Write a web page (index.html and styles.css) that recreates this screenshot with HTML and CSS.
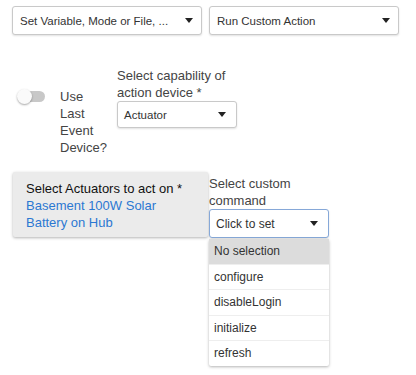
FILE: index.html
```html
<!DOCTYPE html>
<html>
<head>
<meta charset="utf-8">
<link rel="stylesheet" href="styles.css">
</head>
<body>
<div class="page">
  <div class="row top">
    <div class="select wide"><span class="val">Set Variable, Mode or File, ...</span><span class="caret"></span></div>
    <div class="select wide"><span class="val">Run Custom Action</span><span class="caret"></span></div>
  </div>
  <div class="row mid">
    <div class="toggle-group">
      <span class="toggle"><span class="knob"></span></span>
      <span class="tlabel">Use Last Event Device?</span>
    </div>
    <div class="field">
      <div class="flabel">Select capability of action device *</div>
      <div class="select small"><span class="val">Actuator</span><span class="caret"></span></div>
    </div>
  </div>
  <div class="row bottom">
    <div class="card">
      <div class="card-title">Select Actuators to act on *</div>
      <div class="card-link">Basement 100W Solar Battery on Hub</div>
    </div>
    <div class="field cmd">
      <div class="flabel">Select custom command</div>
      <div class="select small focus"><span class="val">Click to set</span><span class="caret"></span></div>
      <ul class="menu">
        <li class="sel">No selection</li>
        <li>configure</li>
        <li>disableLogin</li>
        <li>initialize</li>
        <li>refresh</li>
      </ul>
    </div>
  </div>
</div>
</body>
</html>
```
FILE: styles.css
```css
html, body {
  margin: 0;
  padding: 0;
  background: #ffffff;
}
body {
  font-family: "Liberation Sans", Arial, sans-serif;
  color: #333;
}
.page {
  padding: 6px 0 0 12px;
  min-height: 375px;
  box-sizing: border-box;
}
.row {
  display: flex;
  align-items: flex-start;
}
.top {
  gap: 7px;
}
.select {
  box-sizing: border-box;
  display: flex;
  align-items: center;
  justify-content: space-between;
  background: #fff;
  border: 1px solid #c9c9c9;
  border-radius: 3px;
  box-shadow: 0 1px 2px rgba(0,0,0,0.12);
  font-size: 11.5px;
  color: #333;
  white-space: nowrap;
}
.select.wide {
  width: 190px;
  height: 29px;
  padding: 0 8px 0 7px;
}
.select.small {
  width: 120px;
  height: 27px;
  padding: 0 10px 0 6px;
  font-size: 11.5px;
}
.select.focus {
  height: 29px;
  border-color: #86a8d8;
  font-size: 12px;
}
.caret {
  width: 0;
  height: 0;
  border-left: 4px solid transparent;
  border-right: 4px solid transparent;
  border-top: 5px solid #222;
}
.mid {
  margin-top: 32px;
}
.toggle-group {
  width: 105px;
  display: flex;
  align-items: flex-start;
  margin-top: 21px;
}
.toggle {
  position: relative;
  width: 27px;
  height: 11px;
  margin: 3px 15px 0 6px;
  background: #c8c8c8;
  border-radius: 6px;
  flex: none;
}
.knob {
  position: absolute;
  left: -1px;
  top: -2px;
  width: 15px;
  height: 15px;
  border-radius: 50%;
  background: #fafafa;
  box-shadow: 0 1px 2px rgba(0,0,0,0.35);
}
.tlabel {
  width: 48px;
  font-size: 13px;
  line-height: 17px;
  color: #444;
}
.flabel {
  font-size: 13px;
  line-height: 17px;
  color: #444;
  width: 125px;
}
.bottom {
  margin-top: 16px;
}
.card {
  box-sizing: border-box;
  width: 195px;
  height: 65px;
  margin-left: 1px;
  padding: 8px 10px 6px 13px;
  background: #ebebeb;
  border-radius: 2px;
  box-shadow: 0 1px 3px rgba(0,0,0,0.3);
  font-size: 13px;
  line-height: 17px;
}
.card-title {
  color: #111;
}
.card-link {
  color: #2b78d2;
}
.cmd {
  margin-left: 1px;
  margin-top: 3px;
}
.menu {
  width: 120px;
  margin: 1px 0 0 0;
  padding: 0;
  list-style: none;
  background: #fff;
  border-radius: 2px;
  box-shadow: 0 1px 3px rgba(0,0,0,0.3);
  font-size: 12px;
  color: #333;
}
.menu li {
  height: 24.5px;
  line-height: 24.5px;
  padding-left: 5px;
  border-top: 1px solid #eeeeee;
}
.menu li.sel {
  background: #dcdcdc;
  border-top: none;
}
```
